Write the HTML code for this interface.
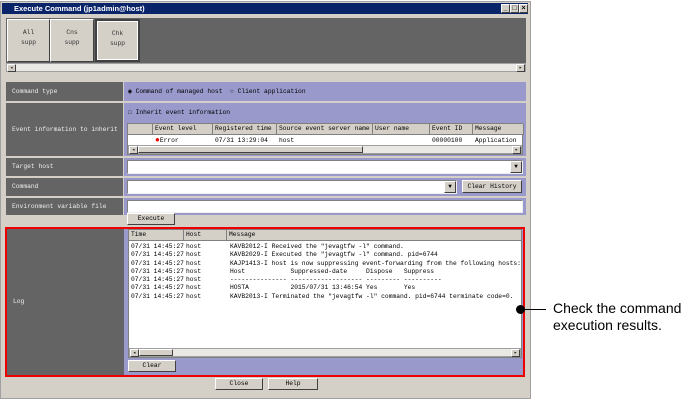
<!DOCTYPE html>
<html><head><style>
*{margin:0;padding:0;box-sizing:border-box}
body{width:689px;height:404px;background:#fff;position:relative;overflow:hidden;font-family:"Liberation Mono",monospace;font-size:6.3px;color:#000}
.a{position:absolute;white-space:nowrap}
.win{left:0;top:1px;width:531px;height:398px;background:#d4d0c8;border:1px solid #a0a0a0}
.title{left:2px;top:3px;width:526px;height:11px;background:#0a246a;color:#fff;font-family:"Liberation Sans",sans-serif;font-weight:bold;font-size:7.5px;line-height:11px;padding-left:12px}
.tb{top:1px;width:9px;height:9px;background:#d4d0c8;border:1px solid #fff;border-right-color:#404040;border-bottom-color:#404040;color:#000;font-size:7px;line-height:7px;text-align:center}
.tabs{left:6px;top:18px;width:520px;height:45px;background:#646464}
.tab{top:1px;height:43px;background:#d4d0c8;border:1px solid #fff;border-right-color:#404040;border-bottom-color:#404040;text-align:center;padding-top:8px;line-height:10px;color:#333}
.sb{background:#eae8e4;border:1px solid #a0a0a0}
.arr{width:9px;height:8px;background:#d4d0c8;border:1px solid #fff;border-right-color:#404040;border-bottom-color:#404040;font-size:5px;line-height:6px;text-align:center}
.lab{left:6px;width:117px;background:#646464;color:#eee;padding-left:6px}
.pur{left:124px;width:402px;background:#9999cc}
.in{background:#fff;border:1px solid #808080;border-right-color:#eee;border-bottom-color:#eee}
.btn{background:#d4d0c8;border:1px solid #fff;border-right-color:#404040;border-bottom-color:#404040;text-align:center;line-height:10px}
.hd{background:#d4d0c8;border-right:1px solid #808080;border-bottom:1px solid #808080;padding-left:2px;line-height:10px;height:11px;top:0;overflow:hidden}
.log .c{white-space:pre;line-height:8.3px;top:13px}
</style></head><body>
<div class="a win"></div>
<div class="a title">Execute Command (jp1admin@host)
<div class="a tb" style="left:499px">_</div><div class="a tb" style="left:508px">□</div><div class="a tb" style="left:517px">×</div></div>
<div class="a tabs">
<div class="a tab" style="left:1px;width:43px">All<br>supp</div>
<div class="a tab" style="left:44px;width:44px">Cns<br>supp</div>
<div class="a tab" style="left:89px;width:45px;border:2px solid #404040;outline:1px solid #fff;outline-offset:-3px">Chk<br>supp</div>
</div>
<div class="a sb" style="left:6px;top:63px;width:520px;height:9px"><div class="a arr" style="left:0;top:0">◂</div><div class="a arr" style="right:0;top:0">▸</div></div>

<div class="a lab" style="top:82px;height:19px;line-height:19px">Command type</div>
<div class="a pur" style="top:82px;height:19px;line-height:19px;padding-left:4px">◉ Command of managed host &nbsp;○ Client application</div>

<div class="a lab" style="top:103px;height:53px;line-height:53px">Event information to inherit</div>
<div class="a pur" style="top:103px;height:53px">
<div class="a" style="left:4px;top:6px">☐ Inherit event information</div>
<div class="a" style="left:3px;top:20px;width:396px;height:32px;background:#fff;border:1px solid #808080">
<div class="a hd" style="left:0;width:25px"></div>
<div class="a hd" style="left:25px;width:60px">Event level</div>
<div class="a hd" style="left:85px;width:64px">Registered time</div>
<div class="a hd" style="left:149px;width:96px">Source event server name</div>
<div class="a hd" style="left:245px;width:57px">User name</div>
<div class="a hd" style="left:302px;width:43px">Event ID</div>
<div class="a hd" style="left:345px;width:51px">Message</div>
<div class="a" style="left:27px;top:12px;line-height:9px"><span style="color:#e00;font-size:8px">●</span>Error</div>
<div class="a" style="left:87px;top:13px">07/31 13:29:04</div>
<div class="a" style="left:151px;top:13px">host</div>
<div class="a" style="left:304px;top:13px">00000100</div>
<div class="a" style="left:347px;top:13px">Application</div>
<div class="a sb" style="left:0;top:21px;width:394px;height:9px"><div class="a" style="left:9px;top:0;width:225px;height:7px;background:#d4d0c8;border:1px solid #fff;border-right-color:#404040;border-bottom-color:#404040"></div><div class="a arr" style="left:0;top:0">◂</div><div class="a arr" style="right:0;top:0">▸</div></div>
</div></div>

<div class="a lab" style="top:158px;height:18px;line-height:18px">Target host</div>
<div class="a pur" style="top:158px;height:18px"><div class="a in" style="left:3px;top:2px;width:396px;height:14px"><div class="a btn" style="right:0;top:0;width:12px;height:12px;font-size:6px">▼</div></div></div>

<div class="a lab" style="top:178px;height:18px;line-height:18px">Command</div>
<div class="a pur" style="top:178px;height:18px"><div class="a in" style="left:3px;top:2px;width:330px;height:14px"><div class="a btn" style="right:0;top:0;width:12px;height:12px;font-size:6px">▼</div></div>
<div class="a btn" style="left:338px;top:2px;width:60px;height:13px;line-height:11px">Clear History</div></div>

<div class="a lab" style="top:198px;height:17px;line-height:17px">Environment variable file</div>
<div class="a pur" style="top:198px;height:17px"><div class="a in" style="left:3px;top:2px;width:396px;height:13px"></div></div>

<div class="a btn" style="left:127px;top:213px;width:48px;height:12px">Execute</div>

<div class="a" style="left:5px;top:227px;width:520px;height:150px;border:2px solid #e00"></div>
<div class="a lab" style="left:7px;top:229px;width:117px;height:146px;line-height:146px">Log</div>
<div class="a" style="left:124px;top:229px;width:399px;height:146px;background:#9999cc"></div>
<div class="a log" style="left:128px;top:229px;width:394px;height:129px;background:#fff;border:1px solid #808080;overflow:hidden">
<div class="a hd" style="left:0;width:55px">Time</div>
<div class="a hd" style="left:55px;width:43px">Host</div>
<div class="a hd" style="left:98px;width:296px">Message</div>
<div class="a c" style="left:2px">07/31 14:45:27
07/31 14:45:27
07/31 14:45:27
07/31 14:45:27
07/31 14:45:27
07/31 14:45:27
07/31 14:45:27</div>
<div class="a c" style="left:57px">host
host
host
host
host
host
host</div>
<div class="a c" style="left:101px">KAVB2012-I Received the "jevagtfw -l" command.
KAVB2029-I Executed the "jevagtfw -l" command. pid=6744
KAJP1413-I host is now suppressing event-forwarding from the following hosts:
Host            Suppressed-date     Dispose   Suppress
--------------- ------------------- --------- ----------
HOSTA           2015/07/31 13:46:54 Yes       Yes
KAVB2013-I Terminated the "jevagtfw -l" command. pid=6744 terminate code=0.</div>
<div class="a sb" style="left:0;top:118px;width:392px;height:9px"><div class="a" style="left:9px;top:0;width:34px;height:7px;background:#d4d0c8;border:1px solid #fff;border-right-color:#404040;border-bottom-color:#404040"></div><div class="a arr" style="left:0;top:0">◂</div><div class="a arr" style="right:0;top:0">▸</div></div>
</div>
<div class="a btn" style="left:128px;top:360px;width:48px;height:12px">Clear</div>

<div class="a btn" style="left:215px;top:378px;width:48px;height:12px">Close</div>
<div class="a btn" style="left:268px;top:378px;width:50px;height:12px">Help</div>

<div class="a" style="left:516px;top:305px;width:9px;height:9px;border-radius:50%;background:#000"></div>
<div class="a" style="left:522px;top:309px;width:24px;height:1px;background:#000"></div>
<div class="a" style="left:553px;top:300px;font-family:'Liberation Sans',sans-serif;font-size:14px;line-height:17px;color:#000">Check the command<br>execution results.</div>
</body></html>
